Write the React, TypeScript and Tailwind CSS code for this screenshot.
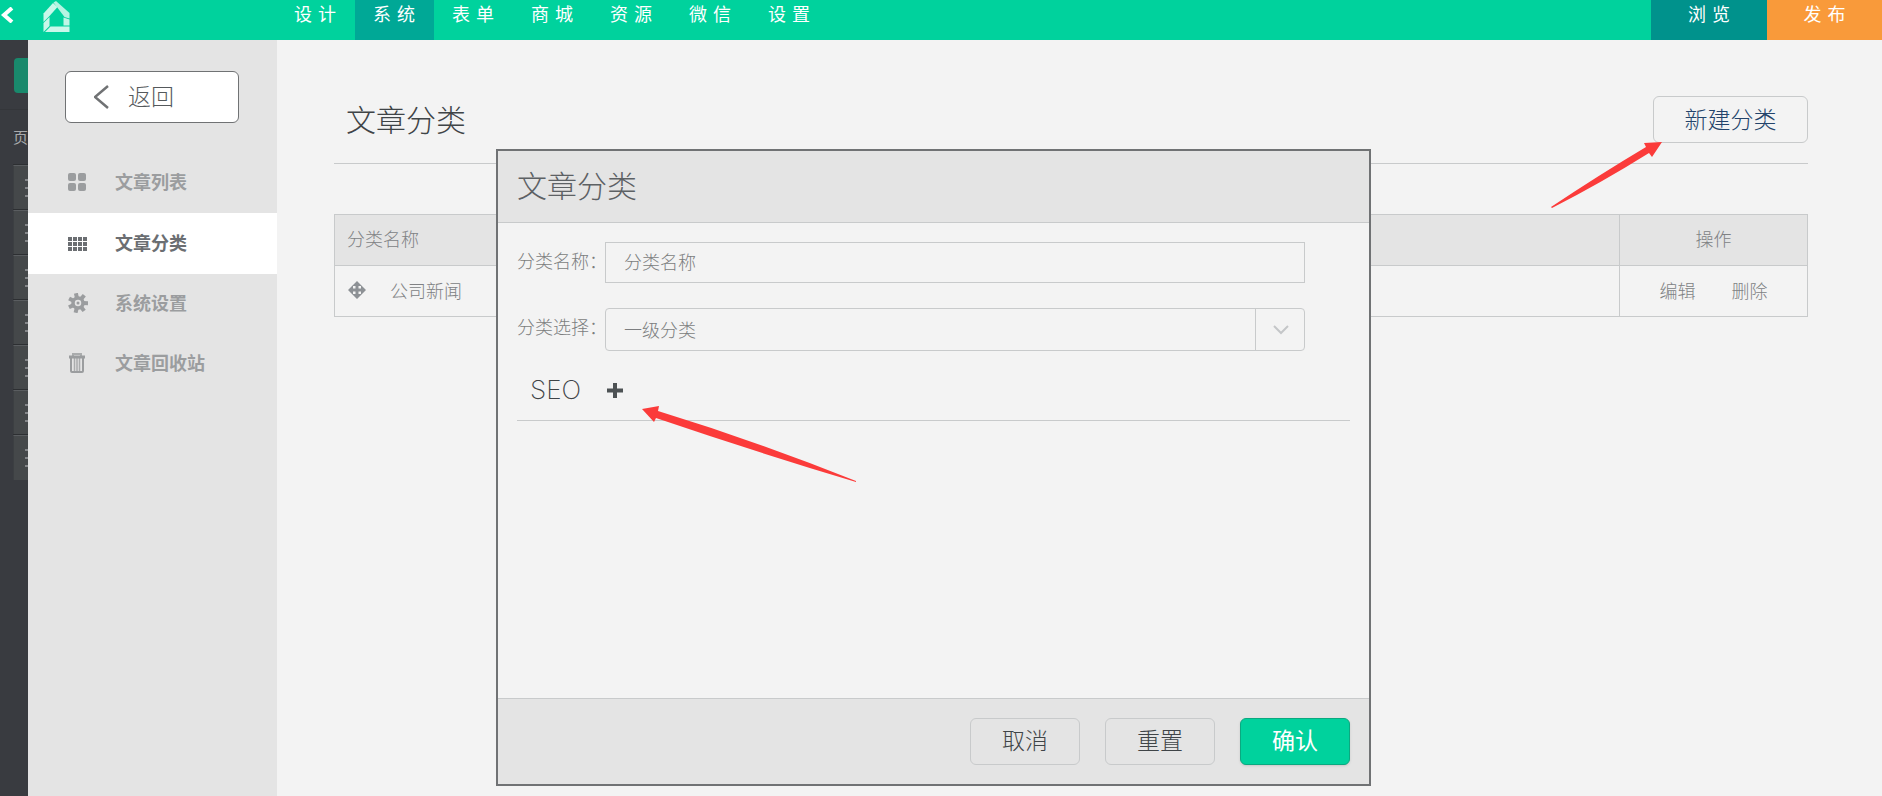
const navItems = ["设计", "系统", "表单", "商城", "资源", "微信", "设置"];

function Logo() {
  return (
    <svg width="28" height="32" viewBox="0 0 28 32" fill="#c9f7ea">
      <path d="M1.5 13.5 11 3l4.5 4-8 9-6 6z" />
      <path d="M1.5 23l6-6v9l-6 6z" />
      <path d="M11.5 2.5 14 1l13.5 12v5.5l-5-1.5z" opacity="0.9" />
      <path d="M21.5 17.5l6 2v6h-6z" opacity="0.95" />
      <path d="M8.5 26.5h19V32H3z" />
    </svg>
  );
}

function ListIcon() {
  return (
    <svg width="20" height="20" viewBox="0 0 20 20" fill="currentColor">
      <rect x="0" y="1" width="8" height="8" rx="2" />
      <rect x="10" y="1" width="8" height="8" rx="2" />
      <rect x="0" y="11" width="8" height="8" rx="2" />
      <rect x="10" y="11" width="8" height="8" rx="2" />
    </svg>
  );
}

function GridIcon() {
  return (
    <svg width="20" height="20" viewBox="1 0 20 20" fill="currentColor">
      {[4, 9, 14].map((y) =>
        [0, 5, 10, 15].map((x) => (
          <rect key={`${x}-${y}`} x={x + 1} y={y} width="4" height="4" />
        ))
      )}
    </svg>
  );
}

function GearIcon() {
  return (
    <svg width="20" height="20" viewBox="0 0 20 20">
      <g fill="currentColor">
        {[0, 51, 103, 154, 206, 257, 309].map((a) => (
          <path key={a} d="M8 5V0h4v5z" transform={`rotate(${a - 12} 10 10)`} />
        ))}
      </g>
      <circle cx="10" cy="10" r="5" fill="none" stroke="currentColor" strokeWidth="3.5" />
      <circle cx="10" cy="10" r="1.5" fill="currentColor" />
    </svg>
  );
}

function TrashIcon() {
  return (
    <svg width="20" height="20" viewBox="0 0 20 20" fill="none" stroke="currentColor">
      <path d="M1 4h16" strokeWidth="3" />
      <path d="M5 3V1h8v2" strokeWidth="2" opacity="0.8" />
      <path d="M3 5v13q0 1 1 1h10q1 0 1-1V5" strokeWidth="2" />
      <path d="M6.5 5v13M9 5v13M11.5 5v13" strokeWidth="1.5" opacity="0.8" />
    </svg>
  );
}

function MoveIcon() {
  return (
    <svg width="18" height="18" viewBox="0 0 18 18" fill="#8d9195">
      <path d="M9 0l5 5h-3.5v2.500H13V4l5 5-5 5v-3.500h-2.500V13H14l-5 5-5-5h3.500v-2.500H5V14L0 9l5-5v3.500h2.500V5H4z" />
    </svg>
  );
}

const menu = [
  { label: "文章列表", icon: <ListIcon />, active: false },
  { label: "文章分类", icon: <GridIcon />, active: true },
  { label: "系统设置", icon: <GearIcon />, active: false },
  { label: "文章回收站", icon: <TrashIcon />, active: false },
];

function Header() {
  return (
    <header className="flex h-10 bg-[#00d29d] text-lg text-white">
      <a href="#" aria-label="后退" className="w-10 pt-[7px]">
        <svg width="14" height="16" viewBox="0 0 14 16" fill="none" stroke="#fff" strokeWidth="4">
          <path d="M12 1 4 8l8 7" />
        </svg>
      </a>
      <a href="#" aria-label="首页" className="pl-[2px]">
        <Logo />
      </a>
      <nav className="ml-[206px] flex">
        {navItems.map((item) => (
          <a
            key={item}
            href="#"
            className={
              item === "系统"
                ? "w-[79px] bg-[#00a896] pl-[18px] leading-[26px] tracking-[6px]"
                : "w-[79px] pl-[18px] leading-[26px] tracking-[6px]"
            }>
            {item}
          </a>
        ))}
      </nav>
      <button className="ml-auto w-[116px] bg-[#00928c] pb-[14px] pl-[6px] leading-[26px] tracking-[6px]">
        浏览
      </button>
      <button className="w-[115px] bg-[#f99a3a] pb-[14px] pl-[6px] leading-[26px] tracking-[6px]">
        发布
      </button>
    </header>
  );
}

function PageStrip() {
  return (
    <div className="w-7 shrink-0 overflow-hidden bg-[#393b40]">
      <div className="h-[70px] border-b border-[#34363a] pl-[14px] pt-[18px]">
        <div className="h-[35px] w-20 rounded bg-[#19896c]" />
      </div>
      <p className="h-[55px] pl-[13px] pt-[15px] text-[15px] leading-6 text-[#a9abad]">页</p>
      <ul className="ml-[13px] w-40">
        {[1, 2, 3, 4, 5, 6, 7].map((n) => (
          <li
            key={n}
            className="flex h-[45px] flex-col gap-[6px] border-l border-t border-l-[#3c3f42] border-t-[#5a5d60] bg-[#45484a] pl-[11px] pt-[13px] shadow-[0_-1px_0_#2d2f32]">
            <span className="h-[2px] w-4 bg-[#85878a]" />
            <span className="h-[2px] w-4 bg-[#85878a]" />
            <span className="h-[2px] w-4 bg-[#85878a]" />
          </li>
        ))}
      </ul>
    </div>
  );
}

function Sidebar() {
  return (
    <aside className="w-[249px] shrink-0 bg-[#e4e4e4]">
      <button className="ml-[37px] mt-[31px] flex h-[52px] w-[174px] items-center rounded-md border border-[#707274] bg-white pl-7 text-[23px] font-light text-[#55595c]">
        <svg width="16" height="24" viewBox="0 0 16 24" fill="none" stroke="#707274" strokeWidth="2.5">
          <path d="M14 1 1 12l13 11" />
        </svg>
        <span className="pb-1 pl-[18px]">返回</span>
      </button>
      <ul className="mt-[30px]">
        {menu.map((m) => (
          <li key={m.label}>
            <a
              href="#"
              className={
                m.active
                  ? "flex h-[61px] items-center bg-white pb-[2px] pl-10 text-lg font-bold text-[#6b6e72]"
                  : "flex h-[60px] items-center pb-[2px] pl-10 text-lg font-bold text-[#9b9d9f]"
              }>
              {m.icon}
              <span className="pb-[2px] pl-[27px]">{m.label}</span>
            </a>
          </li>
        ))}
      </ul>
    </aside>
  );
}

function CategoryTable() {
  return (
    <table className="mt-[50px] w-full border-collapse border border-[#c8cacb] text-lg font-light text-[#808284]">
      <thead>
        <tr className="h-[51px] bg-[#e4e4e4]">
          <th className="border border-[#c8cacb] pb-1 pl-3 text-left font-light">分类名称</th>
          <th className="w-[188px] border border-[#c8cacb] pb-1 font-light">操作</th>
        </tr>
      </thead>
      <tbody>
        <tr className="h-[51px]">
          <td className="border border-[#c8cacb] pb-[3px] pl-[13px]">
            <div className="flex items-center">
              <MoveIcon />
              <span className="pl-6">公司新闻</span>
            </div>
          </td>
          <td className="border border-[#c8cacb] pb-[3px]">
            <div className="flex justify-center gap-9">
              <a href="#">编辑</a>
              <a href="#">删除</a>
            </div>
          </td>
        </tr>
      </tbody>
    </table>
  );
}

function Main() {
  return (
    <main className="flex-1 pl-[57px] pr-[74px]">
      <div className="flex h-[124px] items-start justify-between border-b border-[#c8cacb] pl-3">
        <h1 className="pt-[55px] text-[30px] font-light leading-[46px] text-[#3f4447]">文章分类</h1>
        <div className="relative mt-14">
          <button className="h-[47px] w-[155px] rounded-md border border-[#c8cacb] pb-1 text-[23px] font-light leading-8 text-[#24446b]">
            新建分类
          </button>
          <svg
            className="absolute right-[145px] top-[45px]"
            width="114"
            height="68"
            viewBox="0 0 114 68"
            fill="#fb3b3a">
            <path d="M113 1 95 2l2 4Q50 34 2 66l1 1Q52 42 100 12l3 4z" />
          </svg>
        </div>
      </div>
      <CategoryTable />
    </main>
  );
}

function CategoryDialog() {
  return (
    <div className="absolute inset-x-0 top-[149px] flex justify-center pr-[15px]">
      <section
        role="dialog"
        aria-labelledby="dialog-title"
        className="relative w-[875px] border-2 border-[#707274] bg-[#f3f3f3]">
        <h2
          id="dialog-title"
          className="h-[72px] border-b border-[#c8cacb] bg-[#e4e4e4] pl-[19px] text-[30px] font-light leading-[66px] text-[#5d6164]">
          文章分类
        </h2>
        <form className="min-h-[475px] px-[19px] pt-[19px] text-lg font-light text-[#7c7e80]">
          <div className="flex items-center">
            <label htmlFor="name" className="w-[88px] shrink-0 whitespace-nowrap pb-[6px]">
              分类名称：
            </label>
            <input
              id="name"
              placeholder="分类名称"
              className="h-[41px] w-[700px] border border-[#c8cacb] bg-transparent pb-1 pl-[18px] placeholder:text-[#7c7e80]"
            />
          </div>
          <div className="mt-[25px] flex items-center">
            <label htmlFor="level" className="w-[88px] shrink-0 whitespace-nowrap pb-2">
              分类选择：
            </label>
            <div className="relative w-[700px]">
              <select
                id="level"
                className="block h-[43px] w-full appearance-none rounded border border-[#c8cacb] bg-transparent pb-[2px] pl-[18px]">
                <option>一级分类</option>
              </select>
              <div className="pointer-events-none absolute inset-y-0 right-0 flex w-[50px] items-center justify-center border-l border-[#c8cacb]">
                <svg width="16" height="10" viewBox="0 0 16 10" fill="none" stroke="#c4c6c8" strokeWidth="2">
                  <path d="M1 1l7 7 7-7" />
                </svg>
              </div>
            </div>
          </div>
          <div className="flex h-[70px] items-center border-b border-[#c8cacb] pl-[13px] pt-[10px]">
            <span className="font-[Inter] text-[26px] font-extralight text-[#3f4447]">SEO</span>
            <button type="button" aria-label="展开 SEO" className="ml-[26px]">
              <svg width="16" height="16" viewBox="0 0 16 16" fill="#4d5254">
                <path d="M6 0h4v5.5h6v4h-6V15H6V9.5H0v-4h6z" />
              </svg>
            </button>
          </div>
        </form>
        <footer className="flex h-[86px] items-center justify-end gap-[25px] border-t border-[#c8cacb] bg-[#e4e4e4] pr-[19px] text-[23px] leading-8">
          <button className="h-[47px] w-[110px] rounded-md border border-[#c8cacb] pb-[6px] font-light text-[#3f4447]">
            取消
          </button>
          <button className="h-[47px] w-[110px] rounded-md border border-[#c8cacb] pb-[6px] font-light text-[#3f4447]">
            重置
          </button>
          <button className="h-[47px] w-[110px] rounded-md border border-[#0aa980] bg-[#00d29d] pb-[6px] text-white shadow-sm">
            确认
          </button>
        </footer>
        <svg
          className="absolute left-[143px] top-[254px]"
          width="216"
          height="78"
          viewBox="0 0 216 78"
          fill="#fb3b3a">
          <path d="M1 4 18 1l-1 5Q115 36 215 76v1Q112 46 15 13l-2 4z" />
        </svg>
      </section>
    </div>
  );
}

export default function App() {
  return (
    <div className="relative flex min-h-screen flex-col bg-[#f3f3f3] font-['Noto_Sans_CJK_SC',sans-serif]">
      <Header />
      <div className="flex flex-1">
        <PageStrip />
        <Sidebar />
        <Main />
      </div>
      <CategoryDialog />
    </div>
  );
}
